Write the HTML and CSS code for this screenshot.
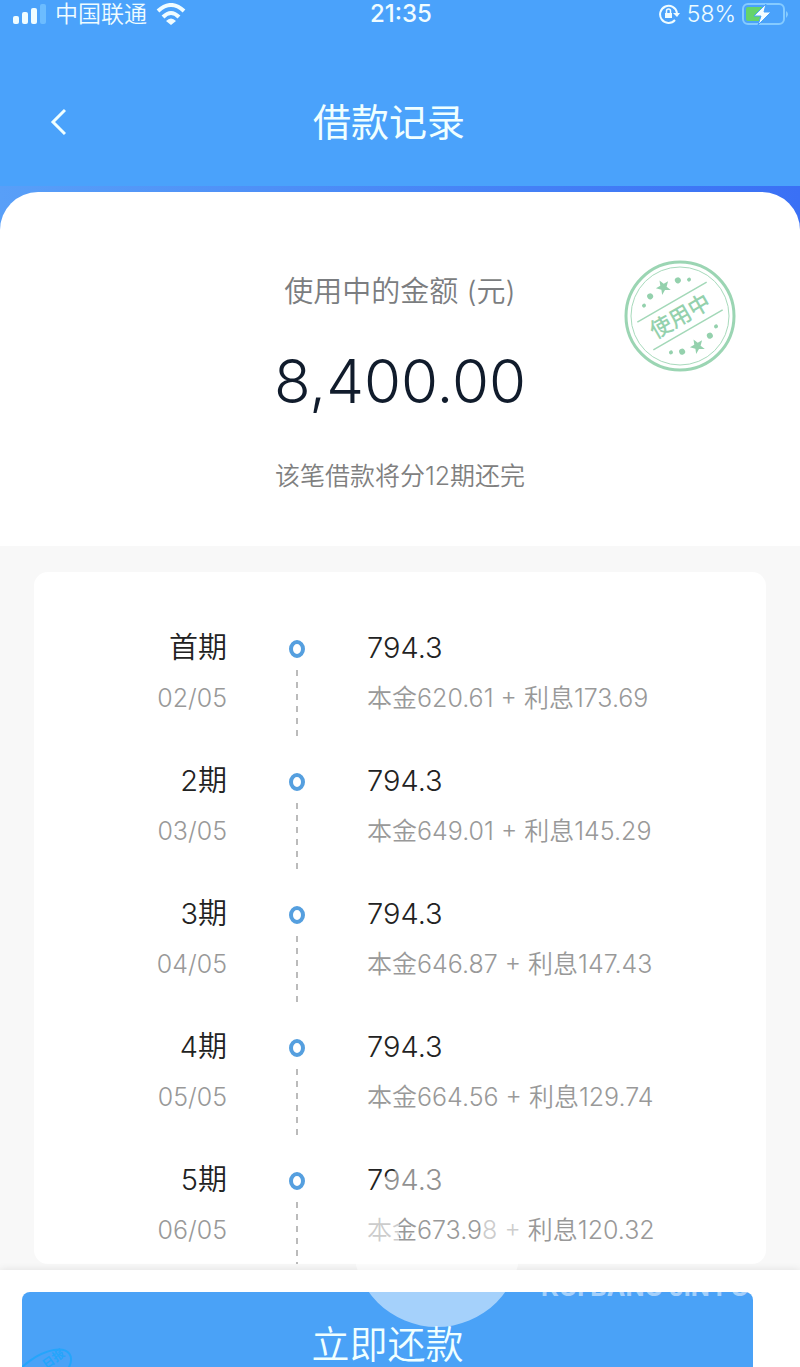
FILE: index.html
```
<!DOCTYPE html>
<html lang="zh-CN">

<head>
    <meta charset="UTF-8">
    <meta name="viewport" content="width=device-width, initial-scale=1.0">
    <title>借款记录</title>
    <link rel="stylesheet" href="styles.css">
</head>
<body>
    <div class="page">
        <div class="status-bar">
            <div class="status-left">
                <svg width="34" height="20" viewBox="0 0 34 20" fill="#effcff">
                    <rect x="1" y="12" width="6" height="8" rx="2"/>
                    <rect x="10" y="8" width="6" height="12" rx="2"/>
                    <rect x="19" y="4" width="6" height="16" rx="2"/>
                    <rect x="28" y="0" width="6" height="20" rx="2" fill="#6cbcff"/>
                </svg>
                <span class="carrier">中国联通</span>
                <svg width="30" height="22" viewBox="0 0 30 22" fill="none" stroke="#effcff" stroke-width="4">
                    <path d="M2 8 Q15 -4 28 8"/>
                    <path d="M7 14 Q15 6 23 14"/>
                    <path d="M15 22 L10 18 Q15 13 20 18 Z" fill="#effcff" stroke="none"/>
                </svg>
            </div>
            <span class="clock">21:35</span>
            <div class="status-right">
                <svg width="22" height="20" viewBox="0 0 22 20" fill="none" stroke="#effcff" stroke-width="2">
                    <path d="M16 16 A8.5 8.5 0 1 1 18 9"/>
                    <path d="M14 9 H21 L18 13 Z" fill="#effcff" stroke="none"/>
                    <rect x="6" y="9" width="7" height="5" fill="#effcff" stroke="none"/>
                    <path d="M7.5 9 V7 A2 2 0 0 1 11.5 7 V9" stroke-width="1.5"/>
                </svg>
                <span class="percent">58%</span>
                <svg width="48" height="22" viewBox="0 0 48 22">
                    <rect x="1" y="1" width="41" height="20" rx="5" fill="none" stroke="#85cbff" stroke-width="2"/>
                    <rect x="4" y="4" width="18" height="14" rx="2" fill="#65d36b"/>
                    <path d="M44 8 Q48 11 44 15 Z" fill="#85cbff"/>
                    <path d="M24 1 L12 13 H19 L16 22 L29 9 H22 Z" fill="#f4fdff" stroke="#4aa2fb" stroke-width="1"/>
                </svg>
            </div>
        </div>

        <header class="header">
            <button class="back" type="button" aria-label="返回">
                <svg width="16" height="28" viewBox="0 0 16 28" fill="none" stroke="#f0ffff" stroke-width="3">
                    <path d="M15 2 L3 14 L15 26"/>
                </svg>
            </button>
            <h1>借款记录</h1>
        </header>

        <div class="banner">
            <section class="summary">
                <p class="label">使用中的金额 (元)</p>
                <p class="amount">8,400.00</p>
                <p class="note">该笔借款将分12期还完</p>
                <svg class="stamp" width="120" height="120" viewBox="0 0 120 120">
                    <circle cx="60" cy="60" r="54" fill="none" stroke="#9bd5b3" stroke-width="3"/>
                    <circle cx="60" cy="60" r="49" fill="none" stroke="#a8dabc" stroke-width="1"/>
                    <g transform="rotate(-30 60 60)">
                        <path d="M20 44 H100 M20 76 H100" stroke="#a3d8b8" stroke-width="1.5"/>
                        <text x="60" y="68" text-anchor="middle">使用中</text>
                        <g fill="#94d1ad">
                            <path id="star" d="M60 19 L62 24 L67 24 L63 28 L65 33 L60 30 L55 33 L57 28 L53 24 L58 24 Z"/>
                            <circle cx="44" cy="28" r="3"/>
                            <circle cx="76" cy="28" r="3"/>
                            <circle cx="34" cy="33" r="2"/>
                            <circle cx="86" cy="33" r="2"/>
                            <use href="#star" y="68"/>
                            <circle cx="44" cy="92" r="3"/>
                            <circle cx="76" cy="92" r="3"/>
                            <circle cx="34" cy="87" r="2"/>
                            <circle cx="86" cy="87" r="2"/>
                        </g>
                    </g>
                </svg>
            </section>
        </div>

        <main class="content">
            <ul class="schedule">
                <li class="term">
                    <div class="when"><strong>首期</strong><span>02/05</span></div>
                    <div class="marker"><i class="dot"></i><i class="line"></i></div>
                    <div class="pay"><strong>794.3</strong><span>本金620.61 + 利息173.69</span></div>
                </li>
                <li class="term">
                    <div class="when"><strong>2期</strong><span>03/05</span></div>
                    <div class="marker"><i class="dot"></i><i class="line"></i></div>
                    <div class="pay"><strong>794.3</strong><span>本金649.01 + 利息145.29</span></div>
                </li>
                <li class="term">
                    <div class="when"><strong>3期</strong><span>04/05</span></div>
                    <div class="marker"><i class="dot"></i><i class="line"></i></div>
                    <div class="pay"><strong>794.3</strong><span>本金646.87 + 利息147.43</span></div>
                </li>
                <li class="term">
                    <div class="when"><strong>4期</strong><span>05/05</span></div>
                    <div class="marker"><i class="dot"></i><i class="line"></i></div>
                    <div class="pay"><strong>794.3</strong><span>本金664.56 + 利息129.74</span></div>
                </li>
                <li class="term">
                    <div class="when"><strong>5期</strong><span>06/05</span></div>
                    <div class="marker"><i class="dot"></i><i class="line"></i></div>
                    <div class="pay"><strong>794.3</strong><span>本金673.98 + 利息120.32</span></div>
                </li>
            </ul>
        </main>

        <footer class="footer">
            <button class="repay" type="button">立即还款</button>
            <svg class="seal" width="60" height="30" viewBox="0 0 60 30">
                <g transform="rotate(-35 20 30)">
                    <ellipse cx="14" cy="35" rx="36" ry="17" fill="none" stroke="#25a5fb" stroke-width="2"/>
                    <text x="22" y="34">日报</text>
                </g>
            </svg>
            <div class="watermark">
                <svg width="168" height="168" viewBox="0 0 168 168">
                    <path d="M84 0 A84 84 0 1 1 84 168 A84 84 0 1 1 84 0 Z M46 38 V90 H130 V38 Z" fill="#fff" fill-opacity="0.5" fill-rule="evenodd"/>
                </svg>
                <span class="mark-text">KUI BANG JIN FU</span>
            </div>
        </footer>
    </div>
</body>
</html>
```

FILE: styles.css
```
* {
    box-sizing: border-box;
}

body {
    margin: 0;
    background-color: #f8f8f8;
    font-family: Inter, "Noto Sans CJK SC", sans-serif;
    font-weight: 350;
}

h1, p, ul {
    margin: 0;
    padding: 0;
}

button {
    border: none;
    padding: 0;
    font-family: inherit;
    font-weight: inherit;
    cursor: pointer;
}

.page {
    height: 100vh;
    display: flex;
    flex-direction: column;
    overflow: hidden;
}

.status-bar {
    display: grid;
    grid-template-columns: 1fr auto 1fr;
    align-items: center;
    height: 28px;
    padding: 0 10px 0 12px;
    background-color: #4aa2fb;
    color: #effcff;
    font-size: 23px;
    line-height: 28px;
}

.status-left, .status-right {
    display: flex;
    align-items: center;
}

.status-left {
    gap: 9px;
}

.status-right {
    justify-content: flex-end;
    gap: 6px;
}

.clock {
    font-size: 24px;
    font-weight: 500;
}

.header {
    display: grid;
    grid-template-columns: 80px 1fr 102px;
    height: 158px;
    padding-top: 66px;
    background-color: #4aa2fb;
    color: #f0ffff;
}

.header h1 {
    font-size: 38px;
    line-height: 56px;
    font-weight: 400;
    text-align: center;
}

.back {
    display: flex;
    justify-content: flex-end;
    align-items: center;
    height: 56px;
    padding-right: 14px;
    background: none;
}

.banner {
    padding-top: 6px;
    background: linear-gradient(90deg, #589ff8, #3a70f5);
}

.summary {
    position: relative;
    padding: 78px 0 51px;
    border-radius: 38px 38px 0 0;
    background-color: #fff;
    text-align: center;
}

.label {
    color: #7b7d80;
    font-size: 29px;
    line-height: 44px;
}

.amount {
    margin: 31px 0 40px;
    color: #111c2c;
    font-size: 60px;
    line-height: 72px;
}

.note {
    color: #808080;
    font-size: 25px;
    line-height: 38px;
}

.stamp {
    position: absolute;
    top: 64px;
    right: 60px;
}

.stamp text {
    fill: #94d1ad;
    font-size: 22px;
    font-weight: 500;
}

.content {
    flex: 1;
    min-height: 0;
    padding: 26px 34px 6px;
}

.schedule {
    height: 100%;
    padding-top: 54px;
    border-radius: 14px;
    background-color: #fff;
    list-style: none;
    overflow: hidden;
}

.term {
    display: grid;
    grid-template-columns: 193px 140px 1fr;
    height: 133px;
}

.when, .pay {
    display: flex;
    flex-direction: column;
    gap: 6px;
}

.when {
    text-align: right;
}

.term strong {
    color: #222;
    font-size: 29px;
    line-height: 44px;
    font-weight: 350;
}

.term span {
    color: #999;
    font-size: 25px;
    line-height: 44px;
}

.marker {
    display: flex;
    flex-direction: column;
    align-items: center;
    gap: 12px;
    padding-top: 14px;
}

.dot {
    width: 16px;
    height: 18px;
    border: 4px solid #559fdf;
    border-radius: 50%;
}

.line {
    width: 2px;
    height: 66px;
    background: repeating-linear-gradient(#bbb 0 6px, transparent 6px 12px);
}

.footer {
    position: relative;
    flex: none;
    height: 97px;
    padding: 22px 47px 0 22px;
    background-color: #fff;
    box-shadow: 0 0 8px rgba(0, 0, 0, 0.1);
}

.repay {
    display: block;
    width: 100%;
    height: 98px;
    border-radius: 8px;
    background-color: #4aa2f7;
    color: #f0ffff;
    font-size: 38px;
}

.seal {
    position: absolute;
    left: 22px;
    bottom: 0;
}

.seal text {
    fill: #25a5fb;
    font-size: 12px;
    font-weight: 700;
}

.watermark {
    position: absolute;
    left: 353px;
    bottom: 40px;
    display: flex;
    align-items: center;
    gap: 20px;
    pointer-events: none;
}

.mark-text {
    margin-top: 88px;
    color: rgba(255, 255, 255, 0.5);
    font-size: 25px;
    font-weight: 700;
}
```
